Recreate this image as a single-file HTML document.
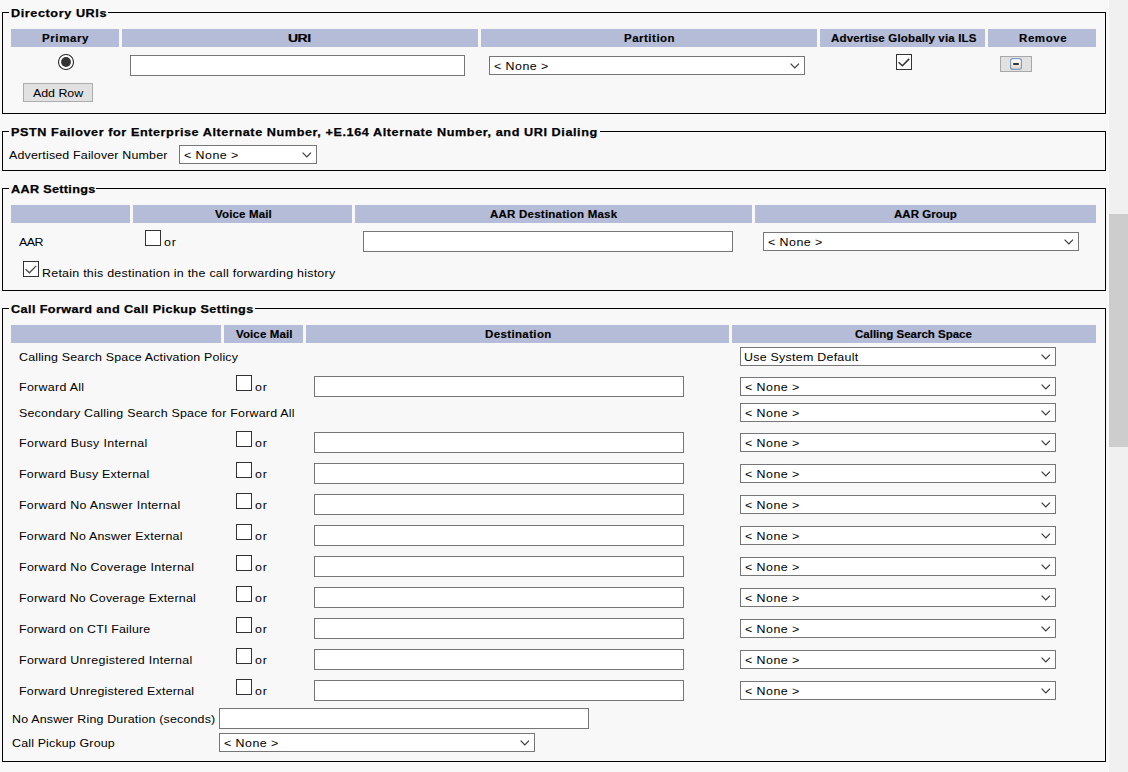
<!DOCTYPE html>
<html><head><meta charset="utf-8"><style>
html,body{margin:0;padding:0;}
body{width:1128px;height:772px;overflow:hidden;background:#f8f8f8;position:relative;font-family:"Liberation Sans",sans-serif;color:#000000;}
body>div,body>svg,body>span{position:absolute;box-sizing:content-box;}
body>span{white-space:pre;line-height:20px;}
</style></head><body>
<div style='left:1108px;top:0px;width:1px;height:772px;background:#fcfcfc;'></div>
<div style='left:1109px;top:0px;width:19px;height:772px;background:#f0f0f0;'></div>
<div style='left:1109px;top:214px;width:19px;height:233px;background:#cdcdcd;'></div>
<div style='left:2px;top:12px;width:1102px;height:100px;border:1px solid #000;'></div>
<div style='left:9px;top:12px;width:99px;height:1px;background:#f8f8f8;'></div>
<div style='left:11px;top:29px;width:108px;height:18px;background:#b4bcd7;'></div>
<div style='left:122px;top:29px;width:356px;height:18px;background:#b4bcd7;'></div>
<div style='left:481px;top:29px;width:336px;height:18px;background:#b4bcd7;'></div>
<div style='left:820px;top:29px;width:165px;height:18px;background:#b4bcd7;'></div>
<div style='left:988px;top:29px;width:108px;height:18px;background:#b4bcd7;'></div>
<svg style='left:58px;top:54px' width='16' height='16' viewBox='0 0 16 16'><circle cx='8' cy='8' r='7.5' fill='#fff' stroke='#333' stroke-width='1.1'/><circle cx='8' cy='8' r='4.9' fill='#333'/></svg>
<div style='left:130px;top:55px;width:333px;height:19px;border:1px solid #767676;background:#fff;'></div>
<div style='left:489px;top:56px;width:314px;height:17px;border:1px solid #767676;background:#fff;'></div>
<svg style='left:790px;top:63px' width='10' height='6' viewBox='0 0 10 6'><path d='M0.6 0.7 L4.8 4.9 L9.0 0.7' fill='none' stroke='#3a3a3a' stroke-width='1.2'/></svg>
<div style='left:896px;top:54px;width:14px;height:14px;border:1px solid #333333;background:#fff;'></div>
<svg style='left:896px;top:54px' width='16' height='16' viewBox='0 0 16 16'><path d='M2.6 8.2 L6.4 11.8 L13.2 4.9' fill='none' stroke='#333' stroke-width='1.5'/></svg>
<div style='left:1000px;top:56px;width:30px;height:14px;border:1px solid #a9a9a9;background:#e1e1e1;'></div>
<svg style='left:1010px;top:58px' width='12' height='12' viewBox='0 0 12 12'><defs><linearGradient id='g1' x1='0' y1='0' x2='0' y2='1'><stop offset='0' stop-color='#ffffff'/><stop offset='0.5' stop-color='#f6f3ee'/><stop offset='1' stop-color='#dccfbd'/></linearGradient></defs><rect x='0.6' y='0.6' width='10.8' height='10.8' rx='2.2' fill='url(#g1)' stroke='#7f9fc3' stroke-width='1.2'/><rect x='3' y='5' width='6' height='2' rx='0.8' fill='#333'/></svg>
<div style='left:23px;top:83px;width:68px;height:17px;border:1px solid #adadad;background:#e1e1e1;'></div>
<div style='left:2px;top:131px;width:1102px;height:38px;border:1px solid #000;'></div>
<div style='left:9px;top:131px;width:591px;height:1px;background:#f8f8f8;'></div>
<div style='left:179px;top:145px;width:136px;height:17px;border:1px solid #767676;background:#fff;'></div>
<svg style='left:302px;top:152px' width='10' height='6' viewBox='0 0 10 6'><path d='M0.6 0.7 L4.8 4.9 L9.0 0.7' fill='none' stroke='#3a3a3a' stroke-width='1.2'/></svg>
<div style='left:2px;top:188px;width:1102px;height:101px;border:1px solid #000;'></div>
<div style='left:9px;top:188px;width:87px;height:1px;background:#f8f8f8;'></div>
<div style='left:11px;top:205px;width:119px;height:18px;background:#b4bcd7;'></div>
<div style='left:133px;top:205px;width:219px;height:18px;background:#b4bcd7;'></div>
<div style='left:355px;top:205px;width:397px;height:18px;background:#b4bcd7;'></div>
<div style='left:755px;top:205px;width:341px;height:18px;background:#b4bcd7;'></div>
<div style='left:145px;top:230px;width:14px;height:14px;border:1px solid #333333;background:#fff;'></div>
<div style='left:363px;top:231px;width:368px;height:19px;border:1px solid #767676;background:#fff;'></div>
<div style='left:763px;top:232px;width:314px;height:17px;border:1px solid #767676;background:#fff;'></div>
<svg style='left:1064px;top:239px' width='10' height='6' viewBox='0 0 10 6'><path d='M0.6 0.7 L4.8 4.9 L9.0 0.7' fill='none' stroke='#3a3a3a' stroke-width='1.2'/></svg>
<div style='left:23px;top:261px;width:14px;height:14px;border:1px solid #333333;background:#fff;'></div>
<svg style='left:23px;top:261px' width='16' height='16' viewBox='0 0 16 16'><path d='M2.6 8.2 L6.4 11.8 L13.2 4.9' fill='none' stroke='#4a4a4a' stroke-width='1.3'/></svg>
<div style='left:2px;top:308px;width:1102px;height:452px;border:1px solid #000;'></div>
<div style='left:9px;top:308px;width:246px;height:1px;background:#f8f8f8;'></div>
<div style='left:11px;top:325px;width:210px;height:18px;background:#b4bcd7;'></div>
<div style='left:224px;top:325px;width:79px;height:18px;background:#b4bcd7;'></div>
<div style='left:306px;top:325px;width:423px;height:18px;background:#b4bcd7;'></div>
<div style='left:732px;top:325px;width:364px;height:18px;background:#b4bcd7;'></div>
<div style='left:740px;top:347px;width:314px;height:17px;border:1px solid #767676;background:#fff;'></div>
<svg style='left:1041px;top:354px' width='10' height='6' viewBox='0 0 10 6'><path d='M0.6 0.7 L4.8 4.9 L9.0 0.7' fill='none' stroke='#3a3a3a' stroke-width='1.2'/></svg>
<div style='left:236px;top:375px;width:14px;height:14px;border:1px solid #333333;background:#fff;'></div>
<div style='left:314px;top:376px;width:368px;height:19px;border:1px solid #767676;background:#fff;'></div>
<div style='left:740px;top:377px;width:314px;height:17px;border:1px solid #767676;background:#fff;'></div>
<svg style='left:1041px;top:384px' width='10' height='6' viewBox='0 0 10 6'><path d='M0.6 0.7 L4.8 4.9 L9.0 0.7' fill='none' stroke='#3a3a3a' stroke-width='1.2'/></svg>
<div style='left:740px;top:403px;width:314px;height:17px;border:1px solid #767676;background:#fff;'></div>
<svg style='left:1041px;top:410px' width='10' height='6' viewBox='0 0 10 6'><path d='M0.6 0.7 L4.8 4.9 L9.0 0.7' fill='none' stroke='#3a3a3a' stroke-width='1.2'/></svg>
<div style='left:236px;top:431px;width:14px;height:14px;border:1px solid #333333;background:#fff;'></div>
<div style='left:314px;top:432px;width:368px;height:19px;border:1px solid #767676;background:#fff;'></div>
<div style='left:740px;top:433px;width:314px;height:17px;border:1px solid #767676;background:#fff;'></div>
<svg style='left:1041px;top:440px' width='10' height='6' viewBox='0 0 10 6'><path d='M0.6 0.7 L4.8 4.9 L9.0 0.7' fill='none' stroke='#3a3a3a' stroke-width='1.2'/></svg>
<div style='left:236px;top:462px;width:14px;height:14px;border:1px solid #333333;background:#fff;'></div>
<div style='left:314px;top:463px;width:368px;height:19px;border:1px solid #767676;background:#fff;'></div>
<div style='left:740px;top:464px;width:314px;height:17px;border:1px solid #767676;background:#fff;'></div>
<svg style='left:1041px;top:471px' width='10' height='6' viewBox='0 0 10 6'><path d='M0.6 0.7 L4.8 4.9 L9.0 0.7' fill='none' stroke='#3a3a3a' stroke-width='1.2'/></svg>
<div style='left:236px;top:493px;width:14px;height:14px;border:1px solid #333333;background:#fff;'></div>
<div style='left:314px;top:494px;width:368px;height:19px;border:1px solid #767676;background:#fff;'></div>
<div style='left:740px;top:495px;width:314px;height:17px;border:1px solid #767676;background:#fff;'></div>
<svg style='left:1041px;top:502px' width='10' height='6' viewBox='0 0 10 6'><path d='M0.6 0.7 L4.8 4.9 L9.0 0.7' fill='none' stroke='#3a3a3a' stroke-width='1.2'/></svg>
<div style='left:236px;top:524px;width:14px;height:14px;border:1px solid #333333;background:#fff;'></div>
<div style='left:314px;top:525px;width:368px;height:19px;border:1px solid #767676;background:#fff;'></div>
<div style='left:740px;top:526px;width:314px;height:17px;border:1px solid #767676;background:#fff;'></div>
<svg style='left:1041px;top:533px' width='10' height='6' viewBox='0 0 10 6'><path d='M0.6 0.7 L4.8 4.9 L9.0 0.7' fill='none' stroke='#3a3a3a' stroke-width='1.2'/></svg>
<div style='left:236px;top:555px;width:14px;height:14px;border:1px solid #333333;background:#fff;'></div>
<div style='left:314px;top:556px;width:368px;height:19px;border:1px solid #767676;background:#fff;'></div>
<div style='left:740px;top:557px;width:314px;height:17px;border:1px solid #767676;background:#fff;'></div>
<svg style='left:1041px;top:564px' width='10' height='6' viewBox='0 0 10 6'><path d='M0.6 0.7 L4.8 4.9 L9.0 0.7' fill='none' stroke='#3a3a3a' stroke-width='1.2'/></svg>
<div style='left:236px;top:586px;width:14px;height:14px;border:1px solid #333333;background:#fff;'></div>
<div style='left:314px;top:587px;width:368px;height:19px;border:1px solid #767676;background:#fff;'></div>
<div style='left:740px;top:588px;width:314px;height:17px;border:1px solid #767676;background:#fff;'></div>
<svg style='left:1041px;top:595px' width='10' height='6' viewBox='0 0 10 6'><path d='M0.6 0.7 L4.8 4.9 L9.0 0.7' fill='none' stroke='#3a3a3a' stroke-width='1.2'/></svg>
<div style='left:236px;top:617px;width:14px;height:14px;border:1px solid #333333;background:#fff;'></div>
<div style='left:314px;top:618px;width:368px;height:19px;border:1px solid #767676;background:#fff;'></div>
<div style='left:740px;top:619px;width:314px;height:17px;border:1px solid #767676;background:#fff;'></div>
<svg style='left:1041px;top:626px' width='10' height='6' viewBox='0 0 10 6'><path d='M0.6 0.7 L4.8 4.9 L9.0 0.7' fill='none' stroke='#3a3a3a' stroke-width='1.2'/></svg>
<div style='left:236px;top:648px;width:14px;height:14px;border:1px solid #333333;background:#fff;'></div>
<div style='left:314px;top:649px;width:368px;height:19px;border:1px solid #767676;background:#fff;'></div>
<div style='left:740px;top:650px;width:314px;height:17px;border:1px solid #767676;background:#fff;'></div>
<svg style='left:1041px;top:657px' width='10' height='6' viewBox='0 0 10 6'><path d='M0.6 0.7 L4.8 4.9 L9.0 0.7' fill='none' stroke='#3a3a3a' stroke-width='1.2'/></svg>
<div style='left:236px;top:679px;width:14px;height:14px;border:1px solid #333333;background:#fff;'></div>
<div style='left:314px;top:680px;width:368px;height:19px;border:1px solid #767676;background:#fff;'></div>
<div style='left:740px;top:681px;width:314px;height:17px;border:1px solid #767676;background:#fff;'></div>
<svg style='left:1041px;top:688px' width='10' height='6' viewBox='0 0 10 6'><path d='M0.6 0.7 L4.8 4.9 L9.0 0.7' fill='none' stroke='#3a3a3a' stroke-width='1.2'/></svg>
<div style='left:219px;top:708px;width:368px;height:19px;border:1px solid #767676;background:#fff;'></div>
<div style='left:219px;top:733px;width:314px;height:17px;border:1px solid #767676;background:#fff;'></div>
<svg style='left:520px;top:740px' width='10' height='6' viewBox='0 0 10 6'><path d='M0.6 0.7 L4.8 4.9 L9.0 0.7' fill='none' stroke='#3a3a3a' stroke-width='1.2'/></svg>
<span style='left:10.5px;top:3.0px;font-size:11.5px;font-weight:700;letter-spacing:0.531px;transform:scaleX(1.1);transform-origin:0 0;-webkit-text-stroke:0.25px #000000;'>Directory URIs</span>
<span style='left:41.6px;top:29.0px;font-size:10px;font-weight:700;letter-spacing:0.522px;transform:scaleX(1.15);transform-origin:0 0;-webkit-text-stroke:0.15px #000000;'>Primary</span>
<span style='left:288.3px;top:29.0px;font-size:10px;font-weight:700;letter-spacing:-0.357px;transform:scaleX(1.4);transform-origin:0 0;-webkit-text-stroke:0.15px #000000;'>URI</span>
<span style='left:623.5px;top:29.0px;font-size:10px;font-weight:700;letter-spacing:0.435px;transform:scaleX(1.15);transform-origin:0 0;-webkit-text-stroke:0.15px #000000;'>Partition</span>
<span style='left:830.6px;top:29.0px;font-size:10px;font-weight:700;letter-spacing:0.146px;transform:scaleX(1.15);transform-origin:0 0;-webkit-text-stroke:0.15px #000000;'>Advertise Globally via ILS</span>
<span style='left:1018.6px;top:29.0px;font-size:10px;font-weight:700;letter-spacing:0.504px;transform:scaleX(1.15);transform-origin:0 0;-webkit-text-stroke:0.15px #000000;'>Remove</span>
<span style='left:493.9px;top:56.0px;font-size:11.5px;font-weight:400;letter-spacing:0.424px;transform:scaleX(1.08);transform-origin:0 0;'>&lt; None &gt;</span>
<span style='left:33.3px;top:83.0px;font-size:11.5px;font-weight:400;letter-spacing:-0.031px;transform:scaleX(1.08);transform-origin:0 0;'>Add Row</span>
<span style='left:11px;top:122.0px;font-size:11.5px;font-weight:700;letter-spacing:0.518px;transform:scaleX(1.1);transform-origin:0 0;-webkit-text-stroke:0.25px #000000;'>PSTN Failover for Enterprise Alternate Number, +E.164 Alternate Number, and URI Dialing</span>
<span style='left:9.4px;top:145.0px;font-size:11.5px;font-weight:400;letter-spacing:0.164px;transform:scaleX(1.08);transform-origin:0 0;'>Advertised Failover Number</span>
<span style='left:183.9px;top:145.0px;font-size:11.5px;font-weight:400;letter-spacing:0.424px;transform:scaleX(1.08);transform-origin:0 0;'>&lt; None &gt;</span>
<span style='left:10.5px;top:179.0px;font-size:11.5px;font-weight:700;letter-spacing:0.289px;transform:scaleX(1.1);transform-origin:0 0;-webkit-text-stroke:0.25px #000000;'>AAR Settings</span>
<span style='left:215.2px;top:205.0px;font-size:10px;font-weight:700;letter-spacing:0.135px;transform:scaleX(1.15);transform-origin:0 0;-webkit-text-stroke:0.15px #000000;'>Voice Mail</span>
<span style='left:490.2px;top:205.0px;font-size:10px;font-weight:700;letter-spacing:0.202px;transform:scaleX(1.15);transform-origin:0 0;-webkit-text-stroke:0.15px #000000;'>AAR Destination Mask</span>
<span style='left:894.2px;top:205.0px;font-size:10px;font-weight:700;letter-spacing:0.021px;transform:scaleX(1.15);transform-origin:0 0;-webkit-text-stroke:0.15px #000000;'>AAR Group</span>
<span style='left:19px;top:232.0px;font-size:11.5px;font-weight:400;letter-spacing:-0.463px;transform:scaleX(1.08);transform-origin:0 0;'>AAR</span>
<span style='left:164px;top:232.0px;font-size:11.5px;font-weight:400;letter-spacing:0.8px;transform:scaleX(1.08);transform-origin:0 0;'>or</span>
<span style='left:767.9px;top:232.0px;font-size:11.5px;font-weight:400;letter-spacing:0.424px;transform:scaleX(1.08);transform-origin:0 0;'>&lt; None &gt;</span>
<span style='left:42px;top:263.0px;font-size:11.5px;font-weight:400;letter-spacing:0.236px;transform:scaleX(1.08);transform-origin:0 0;'>Retain this destination in the call forwarding history</span>
<span style='left:11px;top:299.0px;font-size:11.5px;font-weight:700;letter-spacing:0.366px;transform:scaleX(1.1);transform-origin:0 0;-webkit-text-stroke:0.25px #000000;'>Call Forward and Call Pickup Settings</span>
<span style='left:236px;top:325.0px;font-size:10px;font-weight:700;letter-spacing:0.097px;transform:scaleX(1.15);transform-origin:0 0;-webkit-text-stroke:0.15px #000000;'>Voice Mail</span>
<span style='left:484.8px;top:325.0px;font-size:10px;font-weight:700;letter-spacing:0.321px;transform:scaleX(1.15);transform-origin:0 0;-webkit-text-stroke:0.15px #000000;'>Destination</span>
<span style='left:855.3px;top:325.0px;font-size:10px;font-weight:700;letter-spacing:-0.004px;transform:scaleX(1.15);transform-origin:0 0;-webkit-text-stroke:0.15px #000000;'>Calling Search Space</span>
<span style='left:18.7px;top:347.0px;font-size:11.5px;font-weight:400;letter-spacing:0.158px;transform:scaleX(1.08);transform-origin:0 0;'>Calling Search Space Activation Policy</span>
<span style='left:744px;top:347.0px;font-size:11.5px;font-weight:400;letter-spacing:0.239px;transform:scaleX(1.08);transform-origin:0 0;'>Use System Default</span>
<span style='left:18.7px;top:377.0px;font-size:11.5px;font-weight:400;letter-spacing:0.278px;transform:scaleX(1.08);transform-origin:0 0;'>Forward All</span>
<span style='left:255px;top:377.0px;font-size:11.5px;font-weight:400;letter-spacing:0.8px;transform:scaleX(1.08);transform-origin:0 0;'>or</span>
<span style='left:744.9px;top:377.0px;font-size:11.5px;font-weight:400;letter-spacing:0.424px;transform:scaleX(1.08);transform-origin:0 0;'>&lt; None &gt;</span>
<span style='left:18.7px;top:403.0px;font-size:11.5px;font-weight:400;letter-spacing:0.2px;transform:scaleX(1.08);transform-origin:0 0;'>Secondary Calling Search Space for Forward All</span>
<span style='left:744.9px;top:403.0px;font-size:11.5px;font-weight:400;letter-spacing:0.424px;transform:scaleX(1.08);transform-origin:0 0;'>&lt; None &gt;</span>
<span style='left:18.7px;top:433.0px;font-size:11.5px;font-weight:400;letter-spacing:0.31px;transform:scaleX(1.08);transform-origin:0 0;'>Forward Busy Internal</span>
<span style='left:255px;top:433.0px;font-size:11.5px;font-weight:400;letter-spacing:0.8px;transform:scaleX(1.08);transform-origin:0 0;'>or</span>
<span style='left:744.9px;top:433.0px;font-size:11.5px;font-weight:400;letter-spacing:0.424px;transform:scaleX(1.08);transform-origin:0 0;'>&lt; None &gt;</span>
<span style='left:18.7px;top:464.0px;font-size:11.5px;font-weight:400;letter-spacing:0.212px;transform:scaleX(1.08);transform-origin:0 0;'>Forward Busy External</span>
<span style='left:255px;top:464.0px;font-size:11.5px;font-weight:400;letter-spacing:0.8px;transform:scaleX(1.08);transform-origin:0 0;'>or</span>
<span style='left:744.9px;top:464.0px;font-size:11.5px;font-weight:400;letter-spacing:0.424px;transform:scaleX(1.08);transform-origin:0 0;'>&lt; None &gt;</span>
<span style='left:18.7px;top:495.0px;font-size:11.5px;font-weight:400;letter-spacing:0.267px;transform:scaleX(1.08);transform-origin:0 0;'>Forward No Answer Internal</span>
<span style='left:255px;top:495.0px;font-size:11.5px;font-weight:400;letter-spacing:0.8px;transform:scaleX(1.08);transform-origin:0 0;'>or</span>
<span style='left:744.9px;top:495.0px;font-size:11.5px;font-weight:400;letter-spacing:0.424px;transform:scaleX(1.08);transform-origin:0 0;'>&lt; None &gt;</span>
<span style='left:18.7px;top:526.0px;font-size:11.5px;font-weight:400;letter-spacing:0.197px;transform:scaleX(1.08);transform-origin:0 0;'>Forward No Answer External</span>
<span style='left:255px;top:526.0px;font-size:11.5px;font-weight:400;letter-spacing:0.8px;transform:scaleX(1.08);transform-origin:0 0;'>or</span>
<span style='left:744.9px;top:526.0px;font-size:11.5px;font-weight:400;letter-spacing:0.424px;transform:scaleX(1.08);transform-origin:0 0;'>&lt; None &gt;</span>
<span style='left:18.7px;top:557.0px;font-size:11.5px;font-weight:400;letter-spacing:0.274px;transform:scaleX(1.08);transform-origin:0 0;'>Forward No Coverage Internal</span>
<span style='left:255px;top:557.0px;font-size:11.5px;font-weight:400;letter-spacing:0.8px;transform:scaleX(1.08);transform-origin:0 0;'>or</span>
<span style='left:744.9px;top:557.0px;font-size:11.5px;font-weight:400;letter-spacing:0.424px;transform:scaleX(1.08);transform-origin:0 0;'>&lt; None &gt;</span>
<span style='left:18.7px;top:588.0px;font-size:11.5px;font-weight:400;letter-spacing:0.193px;transform:scaleX(1.08);transform-origin:0 0;'>Forward No Coverage External</span>
<span style='left:255px;top:588.0px;font-size:11.5px;font-weight:400;letter-spacing:0.8px;transform:scaleX(1.08);transform-origin:0 0;'>or</span>
<span style='left:744.9px;top:588.0px;font-size:11.5px;font-weight:400;letter-spacing:0.424px;transform:scaleX(1.08);transform-origin:0 0;'>&lt; None &gt;</span>
<span style='left:18.7px;top:619.0px;font-size:11.5px;font-weight:400;letter-spacing:0.154px;transform:scaleX(1.08);transform-origin:0 0;'>Forward on CTI Failure</span>
<span style='left:255px;top:619.0px;font-size:11.5px;font-weight:400;letter-spacing:0.8px;transform:scaleX(1.08);transform-origin:0 0;'>or</span>
<span style='left:744.9px;top:619.0px;font-size:11.5px;font-weight:400;letter-spacing:0.424px;transform:scaleX(1.08);transform-origin:0 0;'>&lt; None &gt;</span>
<span style='left:18.7px;top:650.0px;font-size:11.5px;font-weight:400;letter-spacing:0.271px;transform:scaleX(1.08);transform-origin:0 0;'>Forward Unregistered Internal</span>
<span style='left:255px;top:650.0px;font-size:11.5px;font-weight:400;letter-spacing:0.8px;transform:scaleX(1.08);transform-origin:0 0;'>or</span>
<span style='left:744.9px;top:650.0px;font-size:11.5px;font-weight:400;letter-spacing:0.424px;transform:scaleX(1.08);transform-origin:0 0;'>&lt; None &gt;</span>
<span style='left:18.7px;top:681.0px;font-size:11.5px;font-weight:400;letter-spacing:0.198px;transform:scaleX(1.08);transform-origin:0 0;'>Forward Unregistered External</span>
<span style='left:255px;top:681.0px;font-size:11.5px;font-weight:400;letter-spacing:0.8px;transform:scaleX(1.08);transform-origin:0 0;'>or</span>
<span style='left:744.9px;top:681.0px;font-size:11.5px;font-weight:400;letter-spacing:0.424px;transform:scaleX(1.08);transform-origin:0 0;'>&lt; None &gt;</span>
<span style='left:11.6px;top:709.0px;font-size:11.5px;font-weight:400;letter-spacing:0.167px;transform:scaleX(1.08);transform-origin:0 0;'>No Answer Ring Duration (seconds)</span>
<span style='left:11.6px;top:733.0px;font-size:11.5px;font-weight:400;letter-spacing:0.151px;transform:scaleX(1.08);transform-origin:0 0;'>Call Pickup Group</span>
<span style='left:223.9px;top:733.0px;font-size:11.5px;font-weight:400;letter-spacing:0.424px;transform:scaleX(1.08);transform-origin:0 0;'>&lt; None &gt;</span>
</body></html>
